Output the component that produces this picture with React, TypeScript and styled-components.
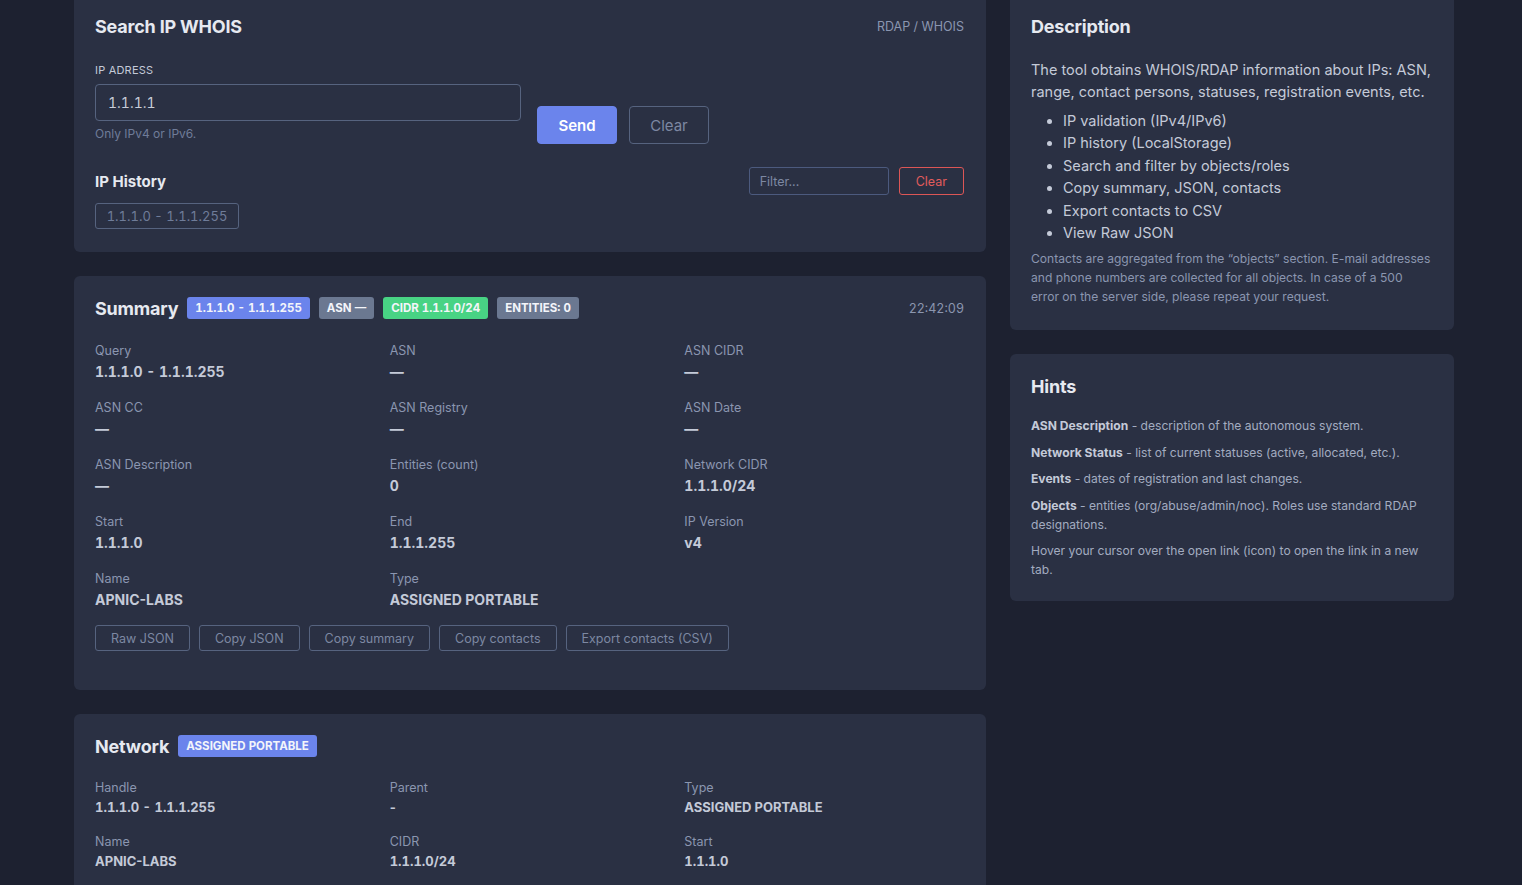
import React from "react";
import styled, { createGlobalStyle, css } from "styled-components";

const GlobalStyle = createGlobalStyle`
  html, body {
    margin: 0;
    padding: 0;
    background: #1d2130;
    font-family: Inter, "Noto Sans", "Liberation Sans", sans-serif;
    color: #c4cad8;
  }
  * { box-sizing: border-box; }
`;

// digits in the original font are tabular, Inter needs it switched on
const tnum = css`
  font-feature-settings: "tnum" 1;
`;

const Page = styled.div`
  display: grid;
  grid-template-columns: 912px 444px;
  column-gap: 24px;
  align-items: start;
  padding-left: 74px;
  margin-top: -6px;
`;

const Column = styled.div`
  display: flex;
  flex-direction: column;
  gap: 24px;
`;

const Card = styled.section<{ $pb?: number }>`
  background: #2a3043;
  border-radius: 6px;
  padding: 20px 22px ${(p) => p.$pb ?? 22}px 21px;
`;

const CardHead = styled.div`
  display: flex;
  align-items: center;
  justify-content: space-between;
  height: 24px;
`;

const TitleGroup = styled.div`
  display: flex;
  align-items: center;
  gap: 9px;
`;

const Title = styled.h2`
  margin: 0;
  font-size: 18px;
  font-weight: 700;
  color: #e6e9f0;
  letter-spacing: -0.2px;
`;

const Meta = styled.span`
  ${tnum};
  font-size: 12.5px;
  color: #8b96b0;
`;

const Badge = styled.span<{ $tone: "primary" | "gray" | "green" }>`
  ${tnum};
  display: inline-flex;
  align-items: center;
  height: 22px;
  padding: 0 8px;
  border-radius: 3px;
  font-size: 11.5px;
  font-weight: 700;
  color: #f3f5fa;
  background: ${(p) =>
    p.$tone === "primary" ? "#6b84ec" : p.$tone === "green" ? "#48d384" : "#6b7891"};
`;

const FieldLabel = styled.div`
  margin-top: 25px;
  font-size: 11px;
  text-transform: uppercase;
  color: #c4cad8;
  letter-spacing: 0.2px;
`;

const FormRow = styled.div`
  display: flex;
  align-items: flex-end;
  gap: 16px;
`;

const InputCol = styled.div`
  width: 426px;
  display: flex;
  flex-direction: column;
`;

const TextInput = styled.div`
  ${tnum};
  margin-top: 7px;
  height: 37px;
  border: 1px solid #56637f;
  border-radius: 4px;
  display: flex;
  align-items: center;
  padding: 0 12px;
  font-size: 14px;
  color: #c8cdd9;
`;

const Hint = styled.div`
  margin-top: 5px;
  font-size: 12px;
  color: #6f7c99;
`;

const ButtonGroup = styled.div`
  display: flex;
  gap: 12px;
  margin-bottom: -3px;
`;

const BigButton = styled.button<{ $primary?: boolean }>`
  height: 38px;
  width: 80px;
  border-radius: 4px;
  font-family: inherit;
  font-size: 15px;
  font-weight: ${(p) => (p.$primary ? 600 : 400)};
  color: ${(p) => (p.$primary ? "#ffffff" : "#7d88a2")};
  background: ${(p) => (p.$primary ? "#6b84ec" : "transparent")};
  border: 1px solid ${(p) => (p.$primary ? "#6b84ec" : "#56637f")};
`;

const HistoryHead = styled.div`
  margin-top: 26px;
  display: flex;
  align-items: center;
  justify-content: space-between;
`;

const SubTitle = styled.h3`
  margin: 0;
  font-size: 15px;
  font-weight: 700;
  color: #e6e9f0;
`;

const FilterGroup = styled.div`
  display: flex;
  gap: 10px;
`;

const FilterInput = styled.div`
  width: 140px;
  height: 28px;
  border: 1px solid #4c5a7e;
  border-radius: 3px;
  padding: 0 10px;
  display: flex;
  align-items: center;
  font-size: 12.5px;
  color: #7d88a2;
`;

const SmallButton = styled.button<{ $danger?: boolean }>`
  height: ${(p) => (p.$danger ? 28 : 26)}px;
  padding: 0 ${(p) => (p.$danger ? 16 : 15)}px;
  border-radius: 3px;
  background: transparent;
  font-family: inherit;
  font-size: 12.5px;
  color: ${(p) => (p.$danger ? "#e25c5c" : "#7d88a2")};
  border: 1px solid ${(p) => (p.$danger ? "#dc5656" : "#56637f")};
`;

const Chip = styled.div`
  ${tnum};
  margin-top: 8px;
  width: 144px;
  height: 26px;
  border: 1px solid #56637f;
  border-radius: 3px;
  display: flex;
  align-items: center;
  justify-content: center;
  font-size: 13px;
  color: #6f7c99;
`;

const Grid = styled.div<{ $rowGap: number; $top: number }>`
  display: grid;
  grid-template-columns: repeat(3, 1fr);
  column-gap: 15px;
  row-gap: ${(p) => p.$rowGap}px;
  margin-top: ${(p) => p.$top}px;
`;

const Cell = styled.div`
  display: flex;
  flex-direction: column;
`;

const Label = styled.div`
  font-size: 12.5px;
  line-height: 18px;
  color: #8b96b0;
`;

const Value = styled.div<{ $small?: boolean; $num?: boolean }>`
  ${(p) => p.$num && tnum};
  margin-top: ${(p) => (p.$small ? 1 : 3)}px;
  font-size: ${(p) => (p.$small ? 13 : 14)}px;
  line-height: 18px;
  font-weight: 700;
  color: #c4cad8;
`;

const ActionRow = styled.div`
  display: flex;
  gap: 9px;
  margin-top: 16px;
`;

const Para = styled.p`
  margin: 21px 0 0;
  font-size: 14.5px;
  line-height: 22px;
  color: #c4cad8;
`;

const List = styled.ul`
  margin: 7px 0 0;
  padding-left: 32px;
  font-size: 14.5px;
  line-height: 22.4px;
  color: #c4cad8;
`;

const Note = styled.p`
  margin: 6px 0 0;
  font-size: 12.1px;
  line-height: 18.6px;
  color: #8b96b0;
`;

const HintList = styled.div`
  margin-top: 18px;
  display: flex;
  flex-direction: column;
  gap: 7.5px;
`;

const HintText = styled.p`
  margin: 0;
  font-size: 12.1px;
  line-height: 19px;
  color: #a3acc0;
  b {
    color: #c4cad8;
    font-weight: 700;
  }
`;

const summary = [
  ["Query", "1.1.1.0 - 1.1.1.255"],
  ["ASN", "—"],
  ["ASN CIDR", "—"],
  ["ASN CC", "—"],
  ["ASN Registry", "—"],
  ["ASN Date", "—"],
  ["ASN Description", "—"],
  ["Entities (count)", "0"],
  ["Network CIDR", "1.1.1.0/24"],
  ["Start", "1.1.1.0"],
  ["End", "1.1.1.255"],
  ["IP Version", "v4"],
  ["Name", "APNIC-LABS"],
  ["Type", "ASSIGNED PORTABLE"],
];

const network = [
  ["Handle", "1.1.1.0 - 1.1.1.255"],
  ["Parent", "-"],
  ["Type", "ASSIGNED PORTABLE"],
  ["Name", "APNIC-LABS"],
  ["CIDR", "1.1.1.0/24"],
  ["Start", "1.1.1.0"],
];

const hasDigits = (v: string) => /\d/.test(v);

const App: React.FC = () => {
  return (
    <>
      <GlobalStyle />
      <Page>
        <Column>
          <Card $pb={23}>
            <CardHead>
              <Title>Search IP WHOIS</Title>
              <Meta>RDAP / WHOIS</Meta>
            </CardHead>
            <FormRow>
              <InputCol>
                <FieldLabel>IP adress</FieldLabel>
                <TextInput>1.1.1.1</TextInput>
                <Hint>Only IPv4 or IPv6.</Hint>
              </InputCol>
              <ButtonGroup>
                <BigButton $primary>Send</BigButton>
                <BigButton>Clear</BigButton>
              </ButtonGroup>
            </FormRow>
            <HistoryHead>
              <SubTitle>IP History</SubTitle>
              <FilterGroup>
                <FilterInput>Filter...</FilterInput>
                <SmallButton $danger>Clear</SmallButton>
              </FilterGroup>
            </HistoryHead>
            <Chip>1.1.1.0 - 1.1.1.255</Chip>
          </Card>

          <Card $pb={39}>
            <CardHead>
              <TitleGroup>
                <Title>Summary</Title>
                <Badge $tone="primary">1.1.1.0 - 1.1.1.255</Badge>
                <Badge $tone="gray">ASN —</Badge>
                <Badge $tone="green">CIDR 1.1.1.0/24</Badge>
                <Badge $tone="gray">ENTITIES: 0</Badge>
              </TitleGroup>
              <Meta>22:42:09</Meta>
            </CardHead>
            <Grid $rowGap={18} $top={22}>
              {summary.map(([l, v]) => (
                <Cell key={l}>
                  <Label>{l}</Label>
                  <Value $num={hasDigits(v)}>{v}</Value>
                </Cell>
              ))}
            </Grid>
            <ActionRow>
              <SmallButton>Raw JSON</SmallButton>
              <SmallButton>Copy JSON</SmallButton>
              <SmallButton>Copy summary</SmallButton>
              <SmallButton>Copy contacts</SmallButton>
              <SmallButton>Export contacts (CSV)</SmallButton>
            </ActionRow>
          </Card>

          <Card>
            <CardHead>
              <TitleGroup>
                <Title>Network</Title>
                <Badge $tone="primary">ASSIGNED PORTABLE</Badge>
              </TitleGroup>
            </CardHead>
            <Grid $rowGap={17} $top={21}>
              {network.map(([l, v]) => (
                <Cell key={l}>
                  <Label>{l}</Label>
                  <Value $small $num={hasDigits(v)}>
                    {v}
                  </Value>
                </Cell>
              ))}
            </Grid>
          </Card>
        </Column>

        <Column>
          <Card $pb={24}>
            <CardHead>
              <Title>Description</Title>
            </CardHead>
            <Para>
              The tool obtains WHOIS/RDAP information about IPs: ASN, range,
              contact persons, statuses, registration events, etc.
            </Para>
            <List>
              <li>IP validation (IPv4/IPv6)</li>
              <li>IP history (LocalStorage)</li>
              <li>Search and filter by objects/roles</li>
              <li>Copy summary, JSON, contacts</li>
              <li>Export contacts to CSV</li>
              <li>View Raw JSON</li>
            </List>
            <Note>
              Contacts are aggregated from the “objects” section. E-mail
              addresses and phone numbers are collected for all objects. In case
              of a 500 error on the server side, please repeat your request.
            </Note>
          </Card>

          <Card>
            <CardHead>
              <Title>Hints</Title>
            </CardHead>
            <HintList>
              <HintText>
                <b>ASN Description</b> - description of the autonomous system.
              </HintText>
              <HintText>
                <b>Network Status</b> - list of current statuses (active,
                allocated, etc.).
              </HintText>
              <HintText>
                <b>Events</b> - dates of registration and last changes.
              </HintText>
              <HintText>
                <b>Objects</b> - entities (org/abuse/admin/noc). Roles use
                standard RDAP designations.
              </HintText>
              <HintText>
                Hover your cursor over the open link (icon) to open the link in
                a new tab.
              </HintText>
            </HintList>
          </Card>
        </Column>
      </Page>
    </>
  );
};

export default App;
